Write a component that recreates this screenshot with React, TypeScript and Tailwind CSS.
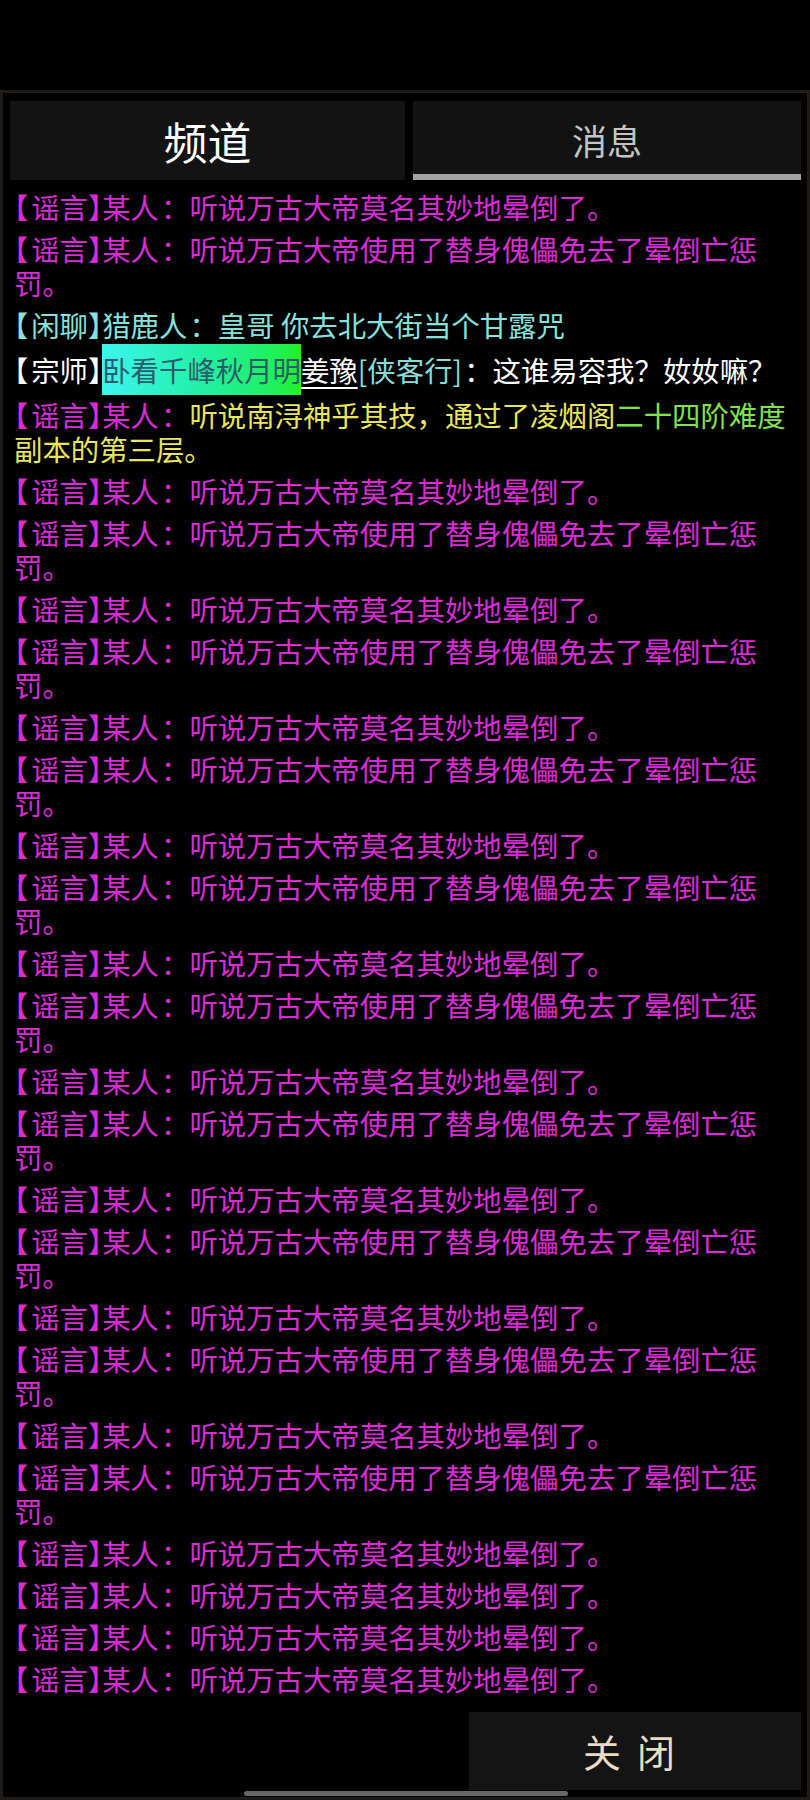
import React from 'react';

type Seg = { text: string; cls: string };

const RUMOR_A = '听说万古大帝莫名其妙地晕倒了。';
const RUMOR_B = '听说万古大帝使用了替身傀儡免去了晕倒亡惩罚。';
const PINK = 'text-[#dc2ad8]';

// brackets in the game font are narrow, colons sit centred
const fmt = (text: string) =>
  text.split(/([【】：])/).map((part, i) => {
    if (part === '【')
      return (
        <span key={i} className="pr-[3px] [font-feature-settings:'halt']">
          {part}
        </span>
      );
    if (part === '】')
      return (
        <span key={i} className="[font-feature-settings:'halt']">
          {part}
        </span>
      );
    if (part === '：')
      return (
        <span key={i} className="pl-[2px]">
          {part}
        </span>
      );
    return <React.Fragment key={i}>{part}</React.Fragment>;
  });

const rumor = (body: string): Seg[] => [
  { text: '【谣言】某人：', cls: PINK },
  { text: body, cls: PINK },
];

const Message: React.FC<{ segs: Seg[] }> = ({ segs }) => (
  <div className="leading-[34px]">
    {segs.map((s, i) => (
      <span key={i} className={s.cls}>
        {fmt(s.text)}
      </span>
    ))}
  </div>
);

const App: React.FC = () => {
  const tail: Seg[][] = [];
  for (let i = 0; i < 9; i++) {
    tail.push(rumor(RUMOR_A));
    tail.push(rumor(RUMOR_B));
  }
  for (let i = 0; i < 4; i++) tail.push(rumor(RUMOR_A));

  return (
    <div
      className="min-h-[1800px] w-[810px] bg-black pt-[90px]"
      style={{ fontFamily: '"Noto Sans CJK SC", "Noto Sans", sans-serif' }}
    >
      <div className="flex h-[1710px] flex-col border-[3px] border-[#1e1b18] bg-black pl-[7px] pr-[6px] pt-[8px]">
        {/* tabs */}
        <div className="flex h-[79px] gap-[8px]">
          <div className="flex w-[395px] items-center justify-center bg-[#131313]">
            <span className="text-[44px] leading-none text-white">频道</span>
          </div>
          <div className="flex flex-1 flex-col bg-[#121212]">
            <div className="flex flex-1 items-center justify-center pt-[4px]">
              <span className="text-[35px] leading-none text-[#c4c4c4]">消息</span>
            </div>
            <div className="h-[6px] bg-[#a3a3a3]" />
          </div>
        </div>

        {/* messages */}
        <div className="mt-[10px] flex w-[789px] flex-col gap-[8px] pl-[4px] text-[28.4px]">
          <Message segs={rumor(RUMOR_A)} />
          <Message segs={rumor(RUMOR_B)} />
          <Message
            segs={[{ text: '【闲聊】猎鹿人：皇哥 你去北大街当个甘露咒', cls: 'text-[#86e2dc]' }]}
          />
          <div className="py-[3px] leading-[34px]">
            <span className="text-white">{fmt('【宗师】')}</span>
            <span className="bg-gradient-to-r from-[#3ef4ee] via-[#22f0a4] to-[#22f022] py-[5px] text-[#2c5c6c]">
              卧看千峰秋月明
            </span>
            <span className="text-white underline decoration-2 underline-offset-[5px]">姜豫</span>
            <span className="text-[#86dcd8]">[侠客行]</span>
            <span className="text-white">{fmt('：这谁易容我？奻奻嘛？')}</span>
          </div>
          <Message
            segs={[
              { text: '【谣言】某人：', cls: PINK },
              { text: '听说南浔神乎其技，通过了凌烟阁', cls: 'text-[#e8e65c]' },
              { text: '二十四阶难度', cls: 'text-[#80e24c]' },
              { text: '副本的第三层。', cls: 'text-[#e8e65c]' },
            ]}
          />
          {tail.map((segs, i) => (
            <Message key={i} segs={segs} />
          ))}
        </div>

        <div className="flex-1" />

        {/* close button */}
        <div className="flex justify-end">
          <button className="flex h-[78px] w-[332px] items-center justify-center bg-[#141414] pl-[4px]">
            <span className="text-[38px] leading-none tracking-[16px] text-[#e8dcc2]">关闭</span>
          </button>
        </div>
        <div className="flex h-[7px] items-end justify-center pb-[1px]">
          <div className="h-[5px] w-[324px] rounded-full bg-[#666666]" />
        </div>
      </div>
    </div>
  );
};

export default App;
